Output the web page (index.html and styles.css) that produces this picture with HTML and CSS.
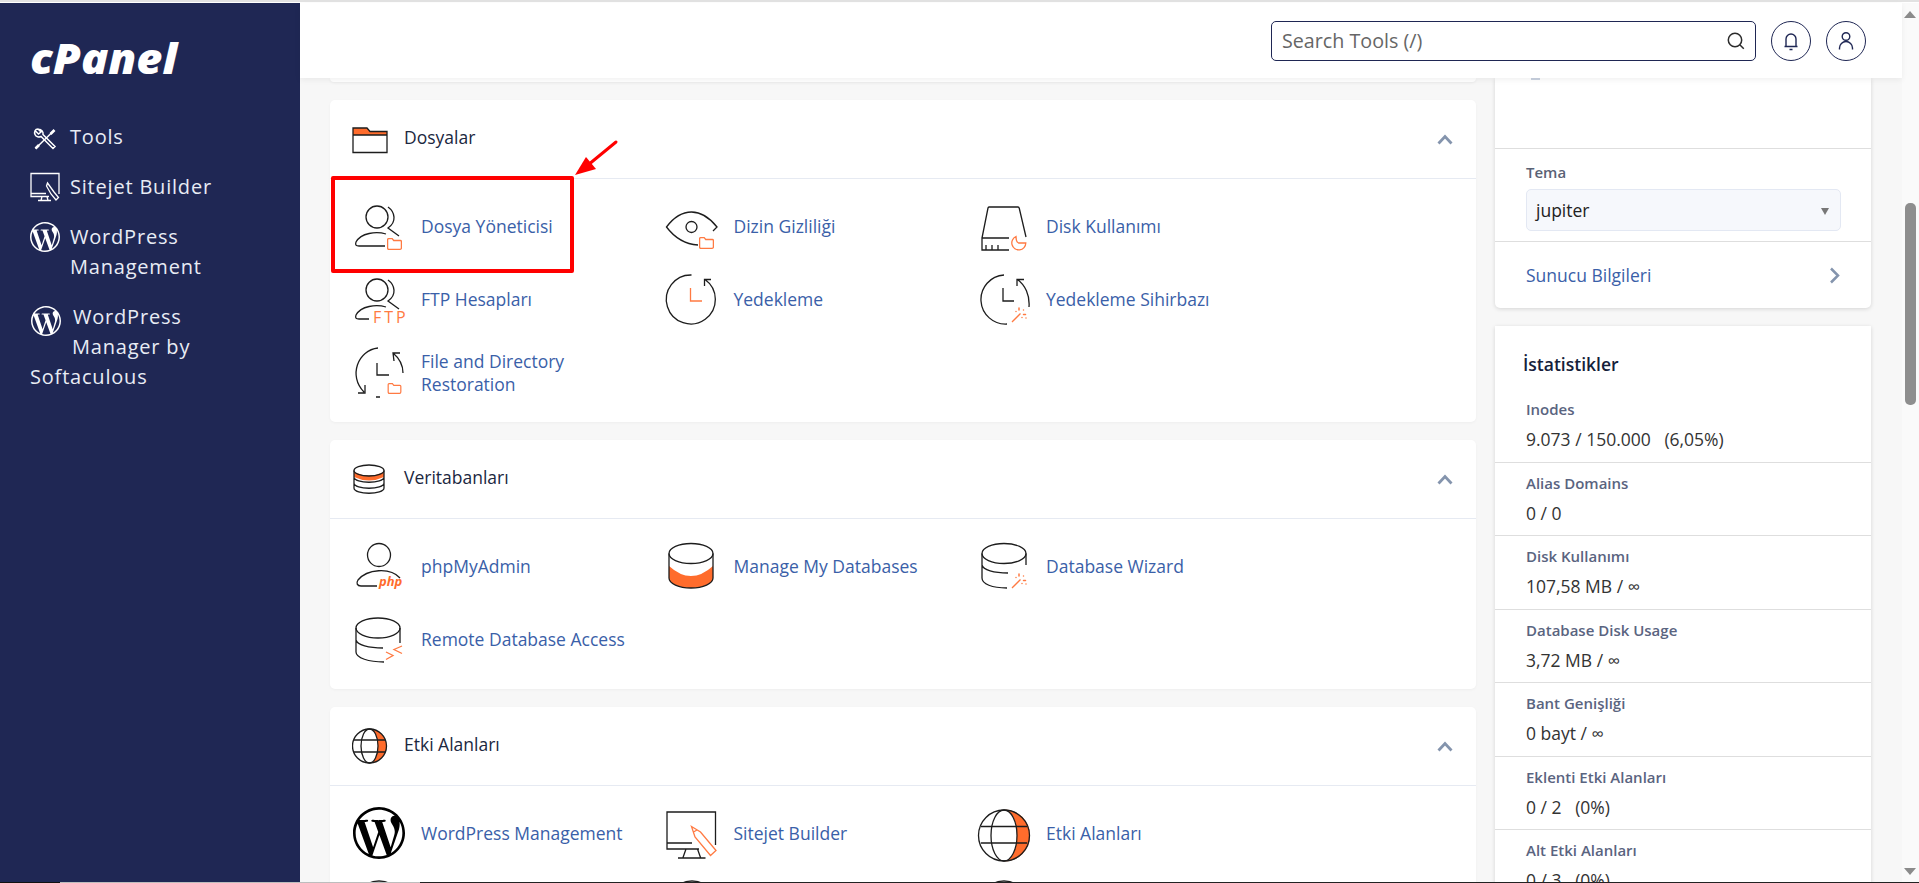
FILE: index.html
```html
<!DOCTYPE html>
<html lang="tr">

<head>
  <meta charset="UTF-8">
  <meta name="viewport" content="width=device-width, initial-scale=1.0">
  <title>cPanel - Tools</title>
  <link rel="stylesheet" href="styles.css">
</head>

<body>
  <!-- Shared icon parts -->
  <svg class="defs" width="0" height="0">
    <symbol id="mini-folder" viewBox="0 0 15 12">
      <path class="or" d="M1.6.7h3.6l1.5 1.8h6.7q1 0 1 1v6.4q0 1.4-1.3 1.4H1.9Q.6 11.3.6 9.9V1.7q0-1 1-1z" />
    </symbol>
    <symbol id="wand" viewBox="0 0 16 16">
      <path class="or" d="M1 15 9.5 6.5" />
      <path class="or dots" d="M8 1v2M12.5 3v.1M14.5 7.5h-2M11 10.5v.1M5 4.500v.1M15 11v.1" />
    </symbol>
    <symbol id="wp" viewBox="0 0 24 24">
      <path d="M21.469 6.825c.84 1.537 1.318 3.3 1.318 5.175 0 3.979-2.156 7.456-5.363 9.325l3.295-9.527c.615-1.54.82-2.771.82-3.864 0-.405-.026-.78-.07-1.11m-7.981.105c.647-.03 1.232-.105 1.232-.105.582-.075.514-.93-.067-.899 0 0-1.755.135-2.88.135-1.064 0-2.85-.15-2.85-.15-.585-.03-.661.855-.075.885 0 0 .54.061 1.125.09l1.68 4.605-2.37 7.08L5.354 6.9c.649-.03 1.234-.1 1.234-.1.585-.075.516-.93-.065-.896 0 0-1.746.138-2.874.138-.2 0-.438-.008-.69-.015C4.911 3.15 8.235 1.215 12 1.215c2.809 0 5.365 1.072 7.286 2.833-.046-.003-.091-.009-.141-.009-1.06 0-1.812.923-1.812 1.914 0 .89.513 1.643 1.06 2.531.411.72.89 1.643.89 2.977 0 .915-.354 1.994-.821 3.479l-1.075 3.585-3.9-11.61.001.014zM12 22.784c-1.059 0-2.081-.153-3.048-.437l3.237-9.406 3.315 9.087c.024.053.05.101.078.149-1.12.393-2.325.609-3.582.609M1.211 12c0-1.564.336-3.05.935-4.39L7.29 21.709C3.694 19.96 1.212 16.271 1.212 12M12 0C5.385 0 0 5.385 0 12s5.385 12 12 12 12-5.385 12-12S18.615 0 12 0" />
    </symbol>
  </svg>

  <div class="top-line"></div>

  <div class="shell">
    <!-- Sidebar -->
    <nav class="sidebar">
      <div class="logo">cPanel</div>
      <a class="side-link">
        <svg class="side-ico tools" viewBox="0 0 24 24">
          <path d="M2.500 21.500 21 3.500" />
          <path class="grip" d="M17.500 7 21.500 3M2.500 21.500 6 18" />
          <path d="M2.500 4 5.500 7 8 5 5 2C2 2 1 5 2 7.500S6 10.500 8 9.500L20 21.500 22 19.500 10 7.500C10.500 5 9 2.500 5 2" />
        </svg>
        <span>Tools</span>
      </a>
      <a class="side-link">
        <svg class="side-ico" viewBox="0 0 30 30">
          <path d="M29 22V1.500H1V24.500H19M1 21.500H16M12 24.500 11 28.500M17 24.500 18 28.500M8 28.500H21" />
          <path d="M17.500 11 24 20l4.500 5.500-2.500 2.500-5-6-4.500-8z" />
        </svg>
        <span>Sitejet Builder</span>
      </a>
      <a class="side-link">
        <svg class="side-wp"><use href="#wp" /></svg>
        <span>WordPress<br>Management</span>
      </a>
      <a class="side-link side-inline">
        <svg class="side-wp"><use href="#wp" /></svg>
        WordPress<br><span class="side-indent">Manager by</span><br>Softaculous
      </a>
    </nav>

    <div class="main">
      <!-- Header -->
      <header class="topbar">
        <div class="search">
          <span>Search Tools (/)</span>
          <svg class="search-ico" viewBox="0 0 18 18">
            <circle cx="8" cy="8" r="6.700" />
            <path d="m12.800 12.800 4 4" />
          </svg>
        </div>
        <div class="round-btn">
          <svg viewBox="0 0 20 20">
            <path d="M3.500 15.500H16.500M5 15.500V8a5 5 0 0 1 10 0v7.500M8.500 18.500h3" />
          </svg>
        </div>
        <div class="round-btn">
          <svg viewBox="0 0 20 20">
            <circle cx="10" cy="5.500" r="3.800" />
            <path d="M3.500 18.500V17a6.500 6.500 0 0 1 13 0v1.500" />
          </svg>
        </div>
      </header>

      <div class="content">
        <div class="left-col">
          <div class="panel-stub"></div>

          <!-- Dosyalar -->
          <section class="panel">
            <div class="panel-head">
              <svg class="head-ico" viewBox="0 0 36 36">
                <path class="or-fill" d="M1 7h14l3 3.500h17V14H1z" />
                <path class="ln" d="M1 14h34v17.500H1zM1 14V7h14l3 3.500h17V14" />
              </svg>
              <h2>Dosyalar</h2>
              <svg class="caret" viewBox="0 0 16 11"><path d="M1.500 9.500 8 2.500l6.500 7" /></svg>
            </div>
            <div class="tools-grid">
              <a class="tool">
                <svg viewBox="0 0 52 52">
                  <circle class="ln" cx="24" cy="17" r="11" />
                  <path class="ln" d="M35 7c7 5 9 15 0 21l11 8M33 34C23 31 8 33 3 42c-1 3 0 4 3 4h26" />
                  <use href="#mini-folder" x="34" y="38" width="15" height="12" />
                </svg>
                <span>Dosya Yöneticisi</span>
              </a>
              <a class="tool">
                <svg viewBox="0 0 52 52">
                  <path class="ln" d="M47 31l4-4C43 17 34 12 25.500 12S8 17 .5 27C8 37 17 44 32 45" />
                  <circle class="ln" cx="25.500" cy="27" r="5.500" />
                  <use href="#mini-folder" x="33" y="37" width="15" height="12" />
                </svg>
                <span>Dizin Gizliliği</span>
              </a>
              <a class="tool">
                <svg viewBox="0 0 52 52">
                  <path class="ln" d="M31 38H4V50H31M4 38 10 8q.2-1 1-1h29q1 0 1.200 1L48 37M8 45v5M14 45v5M20 45v5" />
                  <path class="or" d="M38 36.500A7 7 0 1 0 47.800 43H40.500q-2.500-1-2.500-6.500z" />
                </svg>
                <span>Disk Kullanımı</span>
              </a>
              <a class="tool">
                <svg viewBox="0 0 52 52">
                  <circle class="ln" cx="24" cy="17" r="11" />
                  <path class="ln" d="M35 7c7 5 9 15 0 21l11 8M33 34C23 31 8 33 3 42c-1 3 0 4 3 4h10" />
                  <text class="ftp" x="20" y="50">FTP</text>
                </svg>
                <span>FTP Hesapları</span>
              </a>
              <a class="tool">
                <svg viewBox="0 0 52 52">
                  <path class="ln" d="M25.500 2A24.500 24.500 0 1 0 39 6.500M38.500 13V6.500H45" />
                  <path class="or" d="M24.500 15V28H36" />
                </svg>
                <span>Yedekleme</span>
              </a>
              <a class="tool">
                <svg viewBox="0 0 52 52">
                  <path class="ln" d="M26 2A24.500 24.500 0 0 0 29 51M51 34C52 22 47 12 39.500 6.500M39 13V6.500H46M25 15V28H36" />
                  <use href="#wand" x="33" y="34" width="16" height="16" />
                </svg>
                <span>Yedekleme Sihirbazı</span>
              </a>
              <a class="tool">
                <svg viewBox="0 0 52 52">
                  <path class="ln" d="M25 2C5 4-5 30 11 46M12 39v8H5M50 27c0-8-4-15-10-20M47 7l-7 0 1 8M23 51h4M24 17V29H36" />
                  <use href="#mini-folder" x="34" y="37" width="15" height="11" />
                </svg>
                <span>File and Directory<br>Restoration</span>
              </a>
            </div>
            <!-- Annotation over the first tool -->
            <div class="mark-box"></div>
            <svg class="mark-arrow" viewBox="0 0 46 38">
              <path d="M42 3 14 26" />
              <path class="tip" d="M1 36 12 18 22 30z" />
            </svg>
          </section>

          <!-- Veritabanları -->
          <section class="panel">
            <div class="panel-head">
              <svg class="head-ico" viewBox="0 0 36 36">
                <path class="or-fill" d="M2 11q15 7 30 0v5q-15 7-30 0z" />
                <ellipse class="ln" cx="17" cy="9.500" rx="15" ry="5.500" />
                <path class="ln" d="M2 9.500V27c0 7 30 7 30 0V9.500M2 16c0 7 30 7 30 0M2 22c0 7 30 7 30 0" />
              </svg>
              <h2>Veritabanları</h2>
              <svg class="caret" viewBox="0 0 16 11"><path d="M1.500 9.500 8 2.500l6.500 7" /></svg>
            </div>
            <div class="tools-grid">
              <a class="tool">
                <svg viewBox="0 0 52 52">
                  <circle class="ln" cx="26" cy="15" r="11.500" />
                  <path class="ln" d="M47 38C37 27 14 29 5 40c-2 3-1 6 3 6h16" />
                  <text class="php" x="26" y="46">php</text>
                </svg>
                <span>phpMyAdmin</span>
              </a>
              <a class="tool">
                <svg viewBox="0 0 52 52">
                  <path class="or-fill" d="M3 26q22 20 44 0v12A22 10 0 0 1 3 38z" />
                  <ellipse class="ln" cx="25" cy="13.500" rx="22" ry="10" />
                  <path class="ln" d="M3 13.500V38a22 10 0 0 0 44 0V13.500" />
                </svg>
                <span>Manage My Databases</span>
              </a>
              <a class="tool">
                <svg viewBox="0 0 52 52">
                  <ellipse class="ln" cx="26" cy="13.500" rx="22" ry="10" />
                  <path class="ln" d="M4 13.500V38c0 6 10 10 25 10M4 25c1 5 12 8 26 8M48 13.500V25" />
                  <use href="#wand" x="33" y="33" width="16" height="16" />
                </svg>
                <span>Database Wizard</span>
              </a>
              <a class="tool">
                <svg viewBox="0 0 52 52">
                  <ellipse class="ln" cx="25" cy="15" rx="22" ry="10" />
                  <path class="ln" d="M3 15V39c0 6 13 10 28 10M3 27c1 5 13 8 27 8M47 15V30" />
                  <path class="or" d="m33 39 7 3.500-7 4M49 33l-8 3.500 8 4" />
                </svg>
                <span>Remote Database Access</span>
              </a>
            </div>
          </section>

          <!-- Etki Alanları -->
          <section class="panel">
            <div class="panel-head">
              <svg class="head-ico" viewBox="0 0 36 36">
                <path class="or-fill" d="M17.500 1a17 17 0 0 1 0 34 8.500 17 0 0 0 0-34z" />
                <circle class="ln" cx="17.500" cy="18" r="17" />
                <ellipse class="ln" cx="17.500" cy="18" rx="8.500" ry="17" />
                <path class="ln" d="M2 12H33M2 24H33" />
              </svg>
              <h2>Etki Alanları</h2>
              <svg class="caret" viewBox="0 0 16 11"><path d="M1.500 9.500 8 2.500l6.500 7" /></svg>
            </div>
            <div class="tools-grid">
              <a class="tool">
                <svg viewBox="0 0 52 52"><use href="#wp" width="52" height="52" /></svg>
                <span>WordPress Management</span>
              </a>
              <a class="tool">
                <svg viewBox="0 0 52 52">
                  <path class="ln" d="M49.500 38V5H1V42H33M1 36H26M20 42 17 50.500M31.500 42l3 8.500M12 51H39.500" />
                  <path class="or" d="M25.500 19.500 34.500 25 50 43.500 44.500 48.500 29 30zM27.500 25 31 23" />
                </svg>
                <span>Sitejet Builder</span>
              </a>
              <a class="tool">
                <svg viewBox="0 0 52 52">
                  <path class="or-fill" d="M26 2.500a26 26 0 0 1 0 52 13 26 0 0 0 0-52z" />
                  <circle class="ln" cx="26" cy="28.500" r="25.500" />
                  <ellipse class="ln" cx="26" cy="28.500" rx="13" ry="25.500" />
                  <path class="ln" d="M3 19.500H49M3 36H49" />
                </svg>
                <span>Etki Alanları</span>
              </a>
              <a class="tool"><svg viewBox="0 0 52 52"><circle class="ln" cx="26" cy="26" r="25" /></svg></a>
              <a class="tool"><svg viewBox="0 0 52 52"><circle class="ln" cx="26" cy="26" r="25" /></svg></a>
              <a class="tool"><svg viewBox="0 0 52 52"><circle class="ln" cx="26" cy="26" r="25" /></svg></a>
            </div>
          </section>
        </div>

        <div class="right-col">
          <section class="card">
            <div class="card-top"><i></i></div>
            <div class="theme-row">
              <div class="theme-label">Tema</div>
              <div class="theme-select">jupiter</div>
            </div>
            <a class="server-row">
              <span>Sunucu Bilgileri</span>
              <svg viewBox="0 0 11 17"><path d="M2 1.500 9 8.500l-7 7" /></svg>
            </a>
          </section>

          <section class="card">
            <h3 class="stats-title">İstatistikler</h3>
            <div class="stat"><div class="stat-label">Inodes</div><div class="stat-value">9.073 / 150.000 &nbsp; (6,05%)</div></div>
            <div class="stat"><div class="stat-label">Alias Domains</div><div class="stat-value">0 / 0</div></div>
            <div class="stat"><div class="stat-label">Disk Kullanımı</div><div class="stat-value">107,58 MB / ∞</div></div>
            <div class="stat"><div class="stat-label">Database Disk Usage</div><div class="stat-value">3,72 MB / ∞</div></div>
            <div class="stat"><div class="stat-label">Bant Genişliği</div><div class="stat-value">0 bayt / ∞</div></div>
            <div class="stat"><div class="stat-label">Eklenti Etki Alanları</div><div class="stat-value">0 / 2 &nbsp; (0%)</div></div>
            <div class="stat"><div class="stat-label">Alt Etki Alanları</div><div class="stat-value">0 / 3 &nbsp; (0%)</div></div>
          </section>
        </div>
      </div>
    </div>

    <!-- Browser scrollbar -->
    <div class="scrollbar">
      <div class="arrow-up"></div>
      <div class="thumb"></div>
      <div class="arrow-down"></div>
    </div>
  </div>

  <!-- Edge of the capture -->
  <div class="bottom-edge">
    <i class="edge-a"></i><i class="edge-b"></i><i class="edge-c"></i>
  </div>
</body>

</html>
```

FILE: styles.css
```css
* {
  margin: 0;
  padding: 0;
  box-sizing: border-box;
}

html,
body {
  height: 883px;
  overflow: hidden;
}

body {
  display: flex;
  flex-direction: column;
  position: relative;
  font-family: 'Open Sans', sans-serif;
  background: #f7f7f7;
  color: #1b2740;
}

.defs {
  position: absolute;
}

.top-line {
  height: 3px;
  flex: none;
  background: #fff;
  border-top: 2px solid #e2e2e2;
}

.shell {
  flex: 1;
  min-height: 0;
  display: flex;
}

/* Sidebar */
.sidebar {
  width: 300px;
  flex: none;
  background: #1f2754;
  color: #e8ecf4;
  padding: 0 0 0 30px;
  font-size: 20px;
  line-height: 30px;
  letter-spacing: .8px;
}

.logo {
  height: 119px;
  padding-top: 27px;
  font-size: 43px;
  line-height: 56px;
  font-weight: 800;
  font-style: italic;
  letter-spacing: 0;
  color: #fff;
  transform: scaleX(1.05);
  transform-origin: left;
}

.side-link {
  display: flex;
  gap: 10px;
  margin-bottom: 20px;
}

.side-ico {
  width: 30px;
  height: 30px;
  flex: none;
  fill: none;
  stroke: #fff;
  stroke-width: 1.300;
}

.side-ico.tools {
  padding: 5px 3px 1px;
  stroke-width: 1.500;
}

.side-ico .grip {
  stroke-width: 2.600;
}

.side-wp {
  width: 30px;
  height: 30px;
  flex: none;
  fill: #fff;
}

.side-inline {
  display: block;
}

.side-inline .side-wp {
  vertical-align: -6px;
  margin: -6px 6px -6px 1px;
}

.side-indent {
  margin-left: 42px;
}

/* Header */
.main {
  flex: 1;
  min-width: 0;
  display: flex;
  flex-direction: column;
}

.topbar {
  height: 75px;
  flex: none;
  background: #fff;
  display: flex;
  justify-content: flex-end;
  align-items: flex-start;
  gap: 15px;
  padding: 18px 36px 0 0;
  box-shadow: 0 2px 6px rgba(0, 0, 0, .06);
  position: relative;
  z-index: 2;
}

.search {
  width: 485px;
  height: 40px;
  border: 1.500px solid #1f2754;
  border-radius: 5px;
  display: flex;
  align-items: center;
  justify-content: space-between;
  padding: 0 10px;
  margin-right: 0;
  font-size: 19.700px;
  color: #666;
}

.search span {
  padding-bottom: 2px;
}

.search-ico {
  width: 18px;
  height: 18px;
  fill: none;
  stroke: #2b2b2b;
  stroke-width: 1.500;
}

.round-btn {
  width: 40px;
  height: 40px;
  border: 1.200px solid #1f2754;
  border-radius: 50%;
  display: flex;
  align-items: center;
  justify-content: center;
}

.round-btn svg {
  width: 20px;
  height: 20px;
  fill: none;
  stroke: #1f2754;
  stroke-width: 1.400;
}

/* Content */
.content {
  flex: 1;
  min-height: 0;
  overflow: hidden;
  display: flex;
  gap: 19px;
  padding: 0 31px 0 30px;
}

.left-col {
  width: 1146px;
  flex: none;
}

.right-col {
  width: 376px;
  flex: none;
}

.panel-stub {
  height: 4px;
  margin-bottom: 18px;
  background: #fff;
  border-radius: 0 0 5px 5px;
  box-shadow: 0 1px 3px rgba(0, 0, 0, .06);
}

.panel {
  position: relative;
  background: #fff;
  border-radius: 5px;
  margin-bottom: 18px;
  box-shadow: 0 1px 3px rgba(0, 0, 0, .04);
}

.panel-head {
  height: 79px;
  display: flex;
  align-items: center;
  gap: 16px;
  padding: 0 22px;
  border-bottom: 1px solid #e6eaf2;
}

.panel-head h2 {
  flex: 1;
  margin-top: -4px;
  font-size: 17.500px;
  font-weight: 400;
  color: #1b2740;
}

.head-ico {
  width: 36px;
  height: 36px;
  flex: none;
}

.caret {
  width: 16px;
  height: 11px;
  margin-right: 1px;
  fill: none;
  stroke: #8494ad;
  stroke-width: 2.800;
}

.tools-grid {
  display: grid;
  grid-template-columns: repeat(3, 312.5px);
  grid-auto-rows: 73px;
  padding: 10px 0 14px 23px;
}

.tool {
  display: flex;
  align-items: center;
  gap: 16px;
  font-size: 17.500px;
  line-height: 23px;
  color: #3a60a8;
}

.tool span {
  padding-top: 2px;
}

.tool svg {
  width: 52px;
  height: 52px;
  flex: none;
  overflow: visible;
}

.ln {
  fill: none;
  stroke: #1d1d1d;
  stroke-width: 1.300;
}

.or {
  fill: none;
  stroke: #ff7a42;
  stroke-width: 1.300;
}

.dots {
  stroke-width: 1.500;
  stroke-linecap: round;
}

.or-fill {
  fill: #ff6c2c;
}

.ftp {
  font-size: 16px;
  letter-spacing: 3px;
  fill: #ff7a42;
}

.php {
  font-size: 13px;
  font-weight: 700;
  font-style: italic;
  fill: #ff6c2c;
}

/* Red annotation */
.mark-box {
  position: absolute;
  left: 1px;
  top: 76px;
  width: 243px;
  height: 97px;
  border: 4px solid #f00;
  border-radius: 2px;
}

.mark-arrow {
  position: absolute;
  left: 244px;
  top: 39px;
  width: 46px;
  height: 38px;
}

.mark-arrow path {
  fill: none;
  stroke: #f00;
  stroke-width: 3;
  stroke-linecap: round;
}

.mark-arrow .tip {
  fill: #f00;
  stroke: none;
}

/* Right column */
.card {
  background: #fff;
  margin-bottom: 18px;
  border-radius: 0 0 5px 5px;
  box-shadow: 0 1px 4px rgba(0, 0, 0, .14);
}

.card-top {
  height: 70px;
}

.card-top i {
  display: block;
  width: 9px;
  height: 2px;
  margin-left: 36px;
  background: #c9d2e0;
}

.theme-row {
  height: 94px;
  padding: 13px 30px 0 31px;
  border-top: 1px solid #dedede;
  border-bottom: 1px solid #dedede;
}

.theme-label {
  font-size: 15px;
  line-height: 20px;
  font-weight: 600;
  color: #5a6275;
  margin-bottom: 7px;
}

.theme-select {
  position: relative;
  height: 42px;
  padding-left: 9px;
  background: #f6f8fc;
  border: 1px solid #e3e8f3;
  border-radius: 5px;
  font-size: 17.500px;
  line-height: 40px;
  color: #222;
}

.theme-select::after {
  content: "";
  position: absolute;
  right: 11px;
  top: 18px;
  border-left: 4px solid transparent;
  border-right: 4px solid transparent;
  border-top: 7px solid #777;
}

.server-row {
  height: 66px;
  display: flex;
  align-items: center;
  justify-content: space-between;
  padding: 0 31px;
  font-size: 17.500px;
  color: #3a60a8;
}

.server-row svg {
  width: 11px;
  height: 17px;
  fill: none;
  stroke: #8494ad;
  stroke-width: 2.500;
}

.stats-title {
  height: 63px;
  padding: 26px 28px 0;
  font-size: 17.500px;
  line-height: 24px;
  font-weight: 600;
  color: #14203a;
}

.stat {
  height: 73.500px;
  padding: 10px 31px 0;
  border-bottom: 1px solid #dedede;
}

.stat-label {
  font-size: 15px;
  line-height: 20px;
  font-weight: 600;
  color: #5a6480;
  margin-bottom: 8px;
}

.stat-value {
  font-size: 17.500px;
  line-height: 24px;
  color: #333;
}

/* Scrollbar */
.scrollbar {
  width: 17px;
  flex: none;
  background: #fafafa;
  position: relative;
}

.arrow-up {
  position: absolute;
  left: 2px;
  top: 8px;
  border-left: 6.500px solid transparent;
  border-right: 6.500px solid transparent;
  border-bottom: 7px solid #8b8b8b;
}

.thumb {
  position: absolute;
  left: 3px;
  top: 200px;
  width: 11px;
  height: 202px;
  background: #8e8e8e;
  border-radius: 5px;
}

.arrow-down {
  position: absolute;
  left: 2px;
  bottom: 8px;
  border-left: 6.500px solid transparent;
  border-right: 6.500px solid transparent;
  border-top: 7px solid #8b8b8b;
}

.bottom-edge {
  position: absolute;
  left: 0;
  right: 0;
  bottom: 0;
  height: 1px;
  display: flex;
  z-index: 3;
}

.edge-a {
  width: 60px;
  background: #111;
}

.edge-b {
  width: 360px;
  background: #bdbdbd;
}

.edge-c {
  flex: 1;
  background: #222;
}
```
